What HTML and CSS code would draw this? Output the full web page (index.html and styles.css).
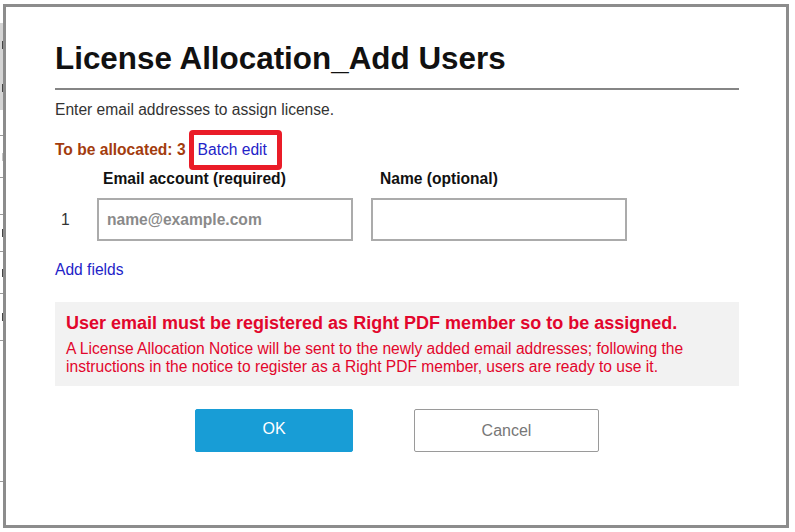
FILE: index.html
```html
<!DOCTYPE html>
<html lang="en">
<head>
<meta charset="utf-8">
<title>License Allocation_Add Users</title>
<link rel="stylesheet" href="styles.css">
</head>
<body>
<div class="page">
  <div class="bg-col">
    <div class="bg-head"><span class="mark"></span><span class="mark"></span></div>
    <div class="bg-row r1"></div>
    <div class="bg-row r2"><span class="mark faint"></span></div>
    <div class="bg-row r3"></div>
    <div class="bg-row r4"><span class="mark"></span></div>
    <div class="bg-row r5"><span class="mark"></span></div>
    <div class="bg-row r6"><span class="mark"></span></div>
    <div class="bg-row r7"></div>
  </div>
</div>

<div class="modal">
  <h1 class="title">License Allocation_Add Users</h1>
  <div class="rule"></div>
  <p class="intro">Enter email addresses to assign license.</p>

  <div class="alloc-row">
    <span class="alloc">To be allocated: 3</span>
    <span class="highlight"><a class="link" href="#">Batch edit</a></span>
  </div>

  <div class="fields">
    <div class="num-h"></div>
    <div class="col-h email-h">Email account (required)</div>
    <div class="col-h name-h">Name (optional)</div>
    <div class="num">1</div>
    <input class="field" type="text" placeholder="name@example.com">
    <input class="field" type="text">
  </div>

  <a class="link add" href="#">Add fields</a>

  <div class="notice">
    <div class="notice-title">User email must be registered as Right PDF member so to be assigned.</div>
    <div class="notice-body">A License Allocation Notice will be sent to the newly added email addresses; following the instructions in the notice to register as a Right PDF member, users are ready to use it.</div>
  </div>

  <div class="actions">
    <button class="btn btn-ok" type="button">OK</button>
    <button class="btn btn-cancel" type="button">Cancel</button>
  </div>
</div>
</body>
</html>
```

FILE: styles.css
```css
html, body {
  margin: 0;
  padding: 0;
  background: #ffffff;
}

body {
  width: 795px;
  height: 532px;
  overflow: hidden;
  position: relative;
  font-family: "Liberation Sans", Arial, sans-serif;
  font-size: 15.6px;
  color: #333333;
}

/* background page sliver at the left edge */
.page {
  display: flex;
  height: 532px;
}

.bg-col {
  width: 4px;
  display: flex;
  flex-direction: column;
  overflow: hidden;
}

.bg-head {
  margin-top: 23px;
  height: 87px;
  background: #d4d4d4;
  display: flex;
  flex-direction: column;
  justify-content: space-around;
}

.bg-row {
  border-bottom: 1px solid #9a9a9a;
  display: flex;
  align-items: center;
}

.mark {
  display: block;
  width: 2px;
  height: 8px;
  border-right: 1px solid #444;
}

.mark.faint { border-right-color: #c4c4c4; }

.r1 { height: 25px; }
.r2 { height: 41px; }
.r3 { height: 36px; }
.r4 { height: 36px; }
.r5 { height: 41px; }
.r6 { height: 46px; }
.r7 { height: 140px; }

/* modal */
.modal {
  position: absolute;
  left: 3px;
  top: 4px;
  width: 786px;
  height: 524px;
  box-sizing: border-box;
  border: 3px solid #8c8c8c;
  background: #ffffff;
  padding: 34px 47px 0 49px;
  display: flex;
  flex-direction: column;
  align-items: flex-start;
}

.title {
  margin: 0;
  font-size: 31.4px;
  line-height: 36px;
  font-weight: bold;
  color: #111111;
}

.rule {
  align-self: stretch;
  height: 2px;
  margin-top: 11px;
  background: #858585;
}

.intro {
  margin: 11px 0 0;
  line-height: 18px;
  color: #333333;
}

.alloc-row {
  margin-top: 11px;
  height: 40px;
  display: flex;
  align-items: center;
  line-height: 18px;
}

.alloc {
  font-weight: bold;
  color: #a33c0e;
}

.highlight {
  margin-left: 3px;
  height: 30px;
  border: 5px solid #ea1c28;
  border-radius: 4px;
  padding: 0 10px 0 4px;
  display: flex;
  align-items: center;
}

.link {
  color: #2323c8;
  text-decoration: none;
  line-height: 18px;
}

.fields {
  display: grid;
  grid-template-columns: 24px 256px 256px;
  column-gap: 18px;
  row-gap: 10px;
  align-items: center;
}

.col-h {
  font-weight: bold;
  color: #111111;
  line-height: 18px;
}

.email-h { padding-left: 6px; }
.name-h { padding-left: 9px; }

.num {
  padding-left: 6px;
  color: #333333;
  line-height: 18px;
}

.field {
  box-sizing: border-box;
  width: 256px;
  height: 43px;
  margin: 0;
  border: 2px solid #ababab;
  padding: 0 8px;
  font-family: "Liberation Sans", Arial, sans-serif;
  font-size: 15.6px;
  color: #333;
  background: #fff;
  outline: none;
}

.field::placeholder {
  color: #8a8a8a;
  font-weight: bold;
  opacity: 1;
}

.add {
  margin-top: 20px;
}

.notice {
  align-self: stretch;
  margin-top: 23px;
  background: #f2f2f2;
  padding: 10px 20px 10px 11px;
  color: #e2062c;
}

.notice-title {
  font-size: 18px;
  line-height: 22px;
  font-weight: bold;
}

.notice-body {
  margin-top: 6px;
  line-height: 18px;
}

.actions {
  align-self: stretch;
  margin-top: 23px;
  display: flex;
  justify-content: center;
  gap: 61px;
}

.btn {
  box-sizing: border-box;
  height: 43px;
  margin: 0;
  border-radius: 2px;
  font-family: "Liberation Sans", Arial, sans-serif;
  font-size: 16px;
  cursor: pointer;
}

.btn-ok {
  width: 158px;
  background: #189dd6;
  border: 1px solid #189dd6;
  color: #ffffff;
  padding: 0 0 4px;
}

.btn-cancel {
  width: 185px;
  background: #ffffff;
  border: 1.5px solid #9a9a9a;
  color: #777777;
}
```
